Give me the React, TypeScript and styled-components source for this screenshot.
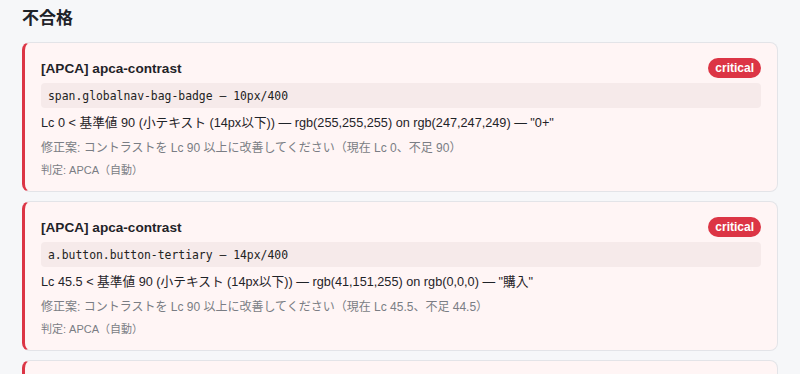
import React from "react";
import styled, { createGlobalStyle } from "styled-components";

const Global = createGlobalStyle`
  html, body { margin: 0; padding: 0; background: #f6f7f9; }
  body { font-family: "Liberation Sans", "Noto Sans CJK JP", sans-serif; color: #1f2328; }
`;

const Page = styled.div`
  padding: 8px 22px 0 22px;
`;

const Heading = styled.h2`
  margin: 0 0 12px 0;
  font-size: 17px;
  line-height: 22px;
  font-weight: 700;
  color: #1f2328;
`;

const List = styled.div`
  display: flex;
  flex-direction: column;
  gap: 9px;
`;

const Card = styled.div`
  background: #fff5f5;
  border: 1px solid #e3e4e8;
  border-left: 3px solid #dc3545;
  border-radius: 8px;
  padding: 15px 16px 13px 16px;
  display: flex;
  flex-direction: column;
`;

const Header = styled.div`
  display: flex;
  align-items: center;
  justify-content: space-between;
  height: 20px;
  margin-bottom: 5px;
`;

const Title = styled.div`
  font-size: 13.6px;
  font-weight: 700;
  color: #1f2328;
`;

const Badge = styled.span`
  background: #dc3545;
  color: #fff;
  font-size: 12px;
  font-weight: 700;
  line-height: 20px;
  padding: 0 7px;
  border-radius: 10px;
`;

const Code = styled.div`
  background: #f6eaea;
  border-radius: 4px;
  padding: 0 7px;
  height: 25px;
  display: flex;
  align-items: center;
  font-family: "DejaVu Sans Mono", monospace;
  font-size: 11.4px;
  color: #222;
  margin-bottom: 5px;
`;

const Message = styled.div`
  font-size: 12.7px;
  line-height: 20px;
  color: #1f2328;
`;

const Fix = styled.div`
  font-size: 12px;
  line-height: 18px;
  color: #7a7d84;
  margin-top: 6px;
`;

const Judge = styled.div`
  font-size: 11px;
  line-height: 16px;
  color: #7a7d84;
  margin-top: 5px;
`;

type Issue = {
  code: string;
  message: string;
  fix: string;
};

const issues: Issue[] = [
  {
    code: "span.globalnav-bag-badge — 10px/400",
    message:
      'Lc 0 < 基準値 90 (小テキスト (14px以下)) — rgb(255,255,255) on rgb(247,247,249) — "0+"',
    fix: "修正案: コントラストを Lc 90 以上に改善してください（現在 Lc 0、不足 90）",
  },
  {
    code: "a.button.button-tertiary — 14px/400",
    message:
      'Lc 45.5 < 基準値 90 (小テキスト (14px以下)) — rgb(41,151,255) on rgb(0,0,0) — "購入"',
    fix: "修正案: コントラストを Lc 90 以上に改善してください（現在 Lc 45.5、不足 44.5）",
  },
  {
    code: "a.button.button-tertiary — 14px/400",
    message: "",
    fix: "",
  },
];

export default function App() {
  return (
    <>
      <Global />
      <Page>
        <Heading>不合格</Heading>
        <List>
          {issues.map((it, i) => (
            <Card key={i}>
              <Header>
                <Title>[APCA] apca-contrast</Title>
                <Badge>critical</Badge>
              </Header>
              <Code>{it.code}</Code>
              <Message>{it.message}</Message>
              <Fix>{it.fix}</Fix>
              <Judge>判定: APCA（自動）</Judge>
            </Card>
          ))}
        </List>
      </Page>
    </>
  );
}
